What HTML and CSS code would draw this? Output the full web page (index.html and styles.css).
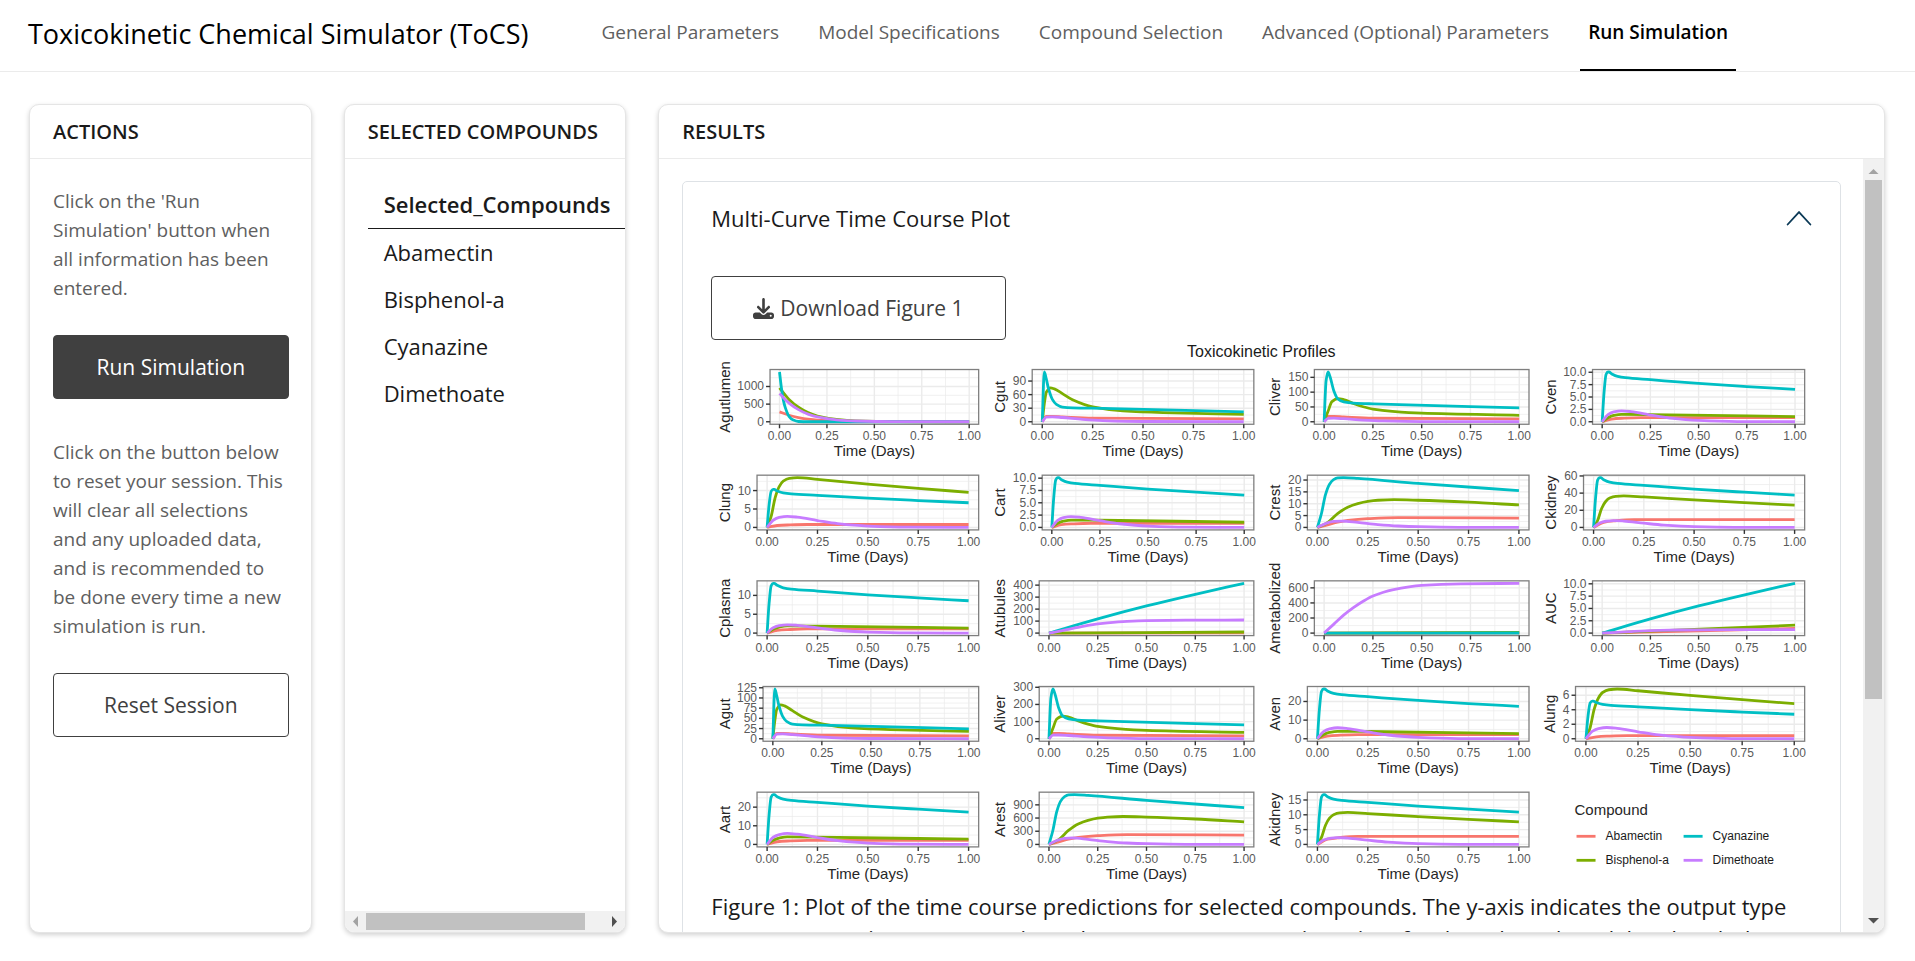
FILE: index.html
```html
<!DOCTYPE html>
<html lang="en">
<head>
<meta charset="utf-8">
<title>Toxicokinetic Chemical Simulator (ToCS)</title>
<link rel="stylesheet" href="styles.css">
</head>
<body>
<header class="navbar">
  <span class="brand">Toxicokinetic Chemical Simulator (ToCS)</span>
  <nav class="tabs">
    <a class="tab" href="#general">General Parameters</a>
    <a class="tab" href="#model">Model Specifications</a>
    <a class="tab" href="#compound">Compound Selection</a>
    <a class="tab" href="#advanced">Advanced (Optional) Parameters</a>
    <a class="tab active" href="#run" aria-current="page">Run Simulation</a>
  </nav>
</header>
<main class="grid">
  <section class="card">
    <h2 class="card-header">ACTIONS</h2>
    <div class="card-body">
      <p class="help">Click on the 'Run Simulation' button when all information has been entered.</p>
      <button class="btn primary" type="button">Run Simulation</button>
      <p class="help">Click on the button below to reset your session. This will clear all selections and any uploaded data, and is recommended to be done every time a new simulation is run.</p>
      <button class="btn" type="button">Reset Session</button>
    </div>
  </section>
  <section class="card">
    <h2 class="card-header">SELECTED COMPOUNDS</h2>
    <div class="table-pane">
      <table class="compounds">
        <thead><tr><th scope="col">Selected_Compounds</th></tr></thead>
        <tbody>
          <tr><td>Abamectin</td></tr>
          <tr><td>Bisphenol-a</td></tr>
          <tr><td>Cyanazine</td></tr>
          <tr><td>Dimethoate</td></tr>
        </tbody>
      </table>
    </div>
    <div class="scroll-x" aria-hidden="true">
      <svg class="arrow" viewBox="0 0 21 21"><path d="M13 5v11l-5-5.5z" fill="#a3a3a3"/></svg>
      <div class="track"><div class="thumb"></div></div>
      <svg class="arrow" viewBox="0 0 21 21"><path d="M8 5v11l5-5.5z" fill="#505050"/></svg>
    </div>
  </section>
  <section class="card wide">
    <h2 class="card-header">RESULTS</h2>
    <div class="results">
      <div class="results-pane">
        <div class="accordion">
          <button class="accordion-toggle" type="button" aria-expanded="true">Multi-Curve Time Course Plot
            <svg class="chevron" viewBox="0 0 24 24"><path d="M1.5 18 12 6.500 22.500 18" fill="none" stroke="#0c3a57" stroke-width="1.700" stroke-linecap="round" stroke-linejoin="round"/></svg>
          </button>
          <div class="accordion-body">
            <button class="btn download" type="button">
              <svg class="icon" viewBox="0 0 512 512" fill="currentColor"><path d="M288 32c0-17.700-14.300-32-32-32s-32 14.300-32 32V274.700l-73.400-73.400c-12.500-12.500-32.800-12.500-45.300 0s-12.500 32.800 0 45.300l128 128c12.500 12.500 32.800 12.500 45.300 0l128-128c12.500-12.500 12.500-32.800 0-45.300s-32.800-12.500-45.300 0L288 274.700V32zM64 352c-35.300 0-64 28.700-64 64v32c0 35.300 28.700 64 64 64H448c35.300 0 64-28.700 64-64V416c0-35.300-28.700-64-64-64H346.500l-45.300 45.300c-25 25-65.500 25-90.500 0L165.500 352H64zm368 56a24 24 0 1 1 0 48 24 24 0 1 1 0-48z"/></svg>
              Download Figure 1
            </button>
            <svg class="figure" id="figure" viewBox="711 340 1100 548" role="img" aria-label="Toxicokinetic Profiles"></svg>
            <p class="caption">Figure 1: Plot of the time course predictions for selected compounds. The y-axis indicates the output type as a concentration or amount in each compartment at a given time for the selected model and each day</p>
          </div>
        </div>
      </div>
      <div class="scroll-y" aria-hidden="true">
        <svg class="arrow" viewBox="0 0 21 21"><path d="M5.500 15h10l-5-5z" fill="#a3a3a3"/></svg>
        <div class="track"><div class="thumb"></div></div>
        <svg class="arrow" viewBox="0 0 21 21"><path d="M5 7h11l-5.500 5.500z" fill="#505050"/></svg>
      </div>
    </div>
  </section>
</main>
<script src="charts.js"></script>
</body>
</html>
```
FILE: styles.css
```css
* { box-sizing: border-box; }
body {
  margin: 0;
  height: 100vh;
  display: flex;
  flex-direction: column;
  overflow: hidden;
  background: #fff;
  color: #1a1a1a;
  font-family: "Open Sans", "Noto Sans", sans-serif;
  font-size: 22px;
  line-height: 33px;
}
button { font: inherit; cursor: pointer; }
.navbar {
  flex: none;
  height: 72px;
  display: flex;
  gap: 65px;
  padding: 0 28px;
  border-bottom: 1px solid #ebebeb;
}
.brand { font-size: 27px; line-height: 67px; color: #000; white-space: nowrap; }
.tabs { display: flex; gap: 23px; }
.tab {
  padding: 0 8px;
  font-size: 19px;
  line-height: 64px;
  color: #5f5f5f;
  text-decoration: none;
  white-space: nowrap;
}
.tab.active { color: #000; font-weight: 600; border-bottom: 2px solid #000; }
.grid {
  flex: 1;
  min-height: 0;
  display: grid;
  grid-template-columns: repeat(12, minmax(0, 1fr));
  gap: 32px;
  padding: 32px 30px 28px 29px;
}
.card {
  grid-column: span 2;
  display: flex;
  flex-direction: column;
  min-height: 0;
  overflow: hidden;
  border: 1px solid #e5e5e5;
  border-radius: 10px;
  box-shadow: 0 2px 5px rgba(0, 0, 0, .18);
  background: #fff;
}
.wide { grid-column: span 8; }
.card-header {
  flex: none;
  margin: 0;
  padding: 1px 23px 0;
  font-size: 20px;
  line-height: 52px;
  font-weight: 600;
  white-space: nowrap;
  border-bottom: 1px solid #ebebeb;
}
.card-body { display: flex; flex-direction: column; padding: 28px 22px 28px 23px; }
.help { margin: 0 0 32px; padding-right: 3px; font-size: 19px; line-height: 29px; color: #5f5f5f; }
.btn {
  height: 64px;
  padding: 0 41px;
  border: 1px solid #404040;
  border-radius: 4px;
  background: #fff;
  color: #404040;
  font-size: 21px;
  white-space: nowrap;
}
.card-body .btn { padding: 0 20px; }
.primary { background: #404040; color: #fff; margin-bottom: 39px; }
.table-pane { flex: 1; overflow: hidden; padding: 22px 0 0 23px; }
.compounds { border-collapse: collapse; min-width: 312px; text-align: left; }
.compounds th { padding: 7px 16px; font-weight: 600; border-bottom: 1px solid #1a1a1a; }
.compounds td { padding: 7px 16px; }
.scroll-x { display: flex; height: 21px; background: #f1f1f1; }
.scroll-x .thumb { width: 92%; height: 17px; margin: 2px 0; }
.arrow { display: block; flex: none; width: 21px; height: 21px; }
.track { flex: 1; }
.thumb { background: #c1c1c1; }
.results { flex: 1; min-height: 0; display: flex; }
.results-pane { flex: 1; min-width: 0; overflow: hidden; padding: 22px 22px 0 23px; }
.accordion { border: 1px solid #dee2e6; border-radius: 5px; padding: 0 28px 28px; }
.accordion-toggle {
  width: 100%;
  height: 72px;
  display: flex;
  align-items: center;
  justify-content: space-between;
  padding: 0;
  border: 0;
  background: none;
  color: #1a1a1a;
}
.chevron { width: 26px; height: 26px; }
.accordion-body { padding-top: 22px; }
.download { display: flex; align-items: center; gap: 6px; }
.icon { width: 21px; height: 21px; }
.figure { display: block; width: 100%; height: auto; font-family: "Liberation Sans", Arial, sans-serif; }
.figure .title { font-size: 16px; fill: #1a1a1a; }
.figure .axis { font-size: 15px; fill: #262626; }
.figure .tick { font-size: 12px; fill: #5a5a5a; }
.figure .key { font-size: 12px; fill: #1a1a1a; }
.caption { margin: 2px 0 0; line-height: 32px; }
.scroll-y { flex: none; width: 21px; display: flex; flex-direction: column; background: #f1f1f1; }
.scroll-y .thumb { width: 17px; height: 71%; margin: 0 2px; }
```
FILE: charts.js
```js
const COLORS = { a: '#F8766D', b: '#7CAE00', c: '#00BFC4', d: '#C77CFF' };

/* Unit-height time courses: [time, value] pairs */
const S = {
  cv: [[0,0],[.01,.6],[.02,.95],[.03,1],[.035,1],[.05,.96],[.08,.91],[.12,.885],[.25,.845],[.5,.77],[.75,.708],[1,.65]],
  bv: [[0,0],[.03,.55],[.06,.85],[.1,1],[.25,.97],[1,.7]],
  av: [[0,0],[.05,.65],[.1,.83],[.2,1],[1,1]],
  dv: [[0,0],[.03,.65],[.06,.9],[.1,1],[.15,.93],[.25,.62],[.35,.34],[.5,.12],[.7,.02],[1,0]],
  cg: [[0,0],[.01,1],[.02,.86],[.03,.68],[.05,.45],[.07,.35],[.1,.295],[.15,.28],[.3,.268],[1,.2]],
  bg: [[0,0],[.01,.53],[.02,.87],[.04,1],[.06,.97],[.1,.83],[.15,.65],[.25,.44],[.4,.32],[.6,.27],[1,.22]],
  ag: [[0,0],[.02,1],[.05,1],[.1,.9],[.25,.66],[1,.55]],
  dg: [[0,0],[.02,.95],[.05,1],[.1,.86],[.2,.48],[.3,.24],[.5,.05],[1,0]],
  cl: [[0,0],[.01,.82],[.02,1],[.03,.91],[.05,.62],[.07,.46],[.1,.4],[.15,.375],[.25,.36],[1,.28]],
  bl: [[0,0],[.02,.45],[.04,.87],[.07,1],[.1,.96],[.15,.79],[.2,.65],[.25,.55],[.35,.45],[.5,.37],[1,.28]],
  bu: [[0,0],[.02,.22],[.04,.6],[.06,.82],[.08,.93],[.11,.985],[.15,1],[.25,.965],[.5,.87],[.75,.785],[1,.705]],
  cr: [[0,0],[.02,.28],[.04,.66],[.06,.87],[.08,.96],[.1,.995],[.13,1],[.2,.985],[.5,.885],[1,.74]],
  br: [[0,0],[.05,.17],[.1,.5],[.15,.73],[.2,.86],[.25,.94],[.3,.98],[.38,1],[.5,.98],[.75,.91],[1,.81]],
  ar: [[0,0],[.05,.25],[.1,.54],[.15,.73],[.25,.9],[.4,1],[1,.96]],
  dr: [[0,0],[.04,.6],[.08,.93],[.12,1],[.2,.78],[.3,.44],[.4,.22],[.5,.11],[.7,.02],[1,0]],
  line: [[0,0],[1,1]],
  bend: [[0,0],[.25,.285],[.5,.545],[.75,.78],[1,1]],
  sat: [[0,0],[.05,.13],[.1,.29],[.15,.44],[.2,.59],[.25,.7],[.3,.78],[.4,.89],[.5,.95],[.7,.99],[1,1]],
  met: [[0,0],[.05,.18],[.1,.36],[.15,.51],[.2,.64],[.25,.745],[.35,.87],[.5,.96],[.7,.99],[1,1]],
  gc: [[0,1],[.01,.68],[.02,.44],[.03,.29],[.05,.11],[.07,.04],[.1,.005],[.15,0],[1,0]],
  gb: [[0,1],[.05,.66],[.1,.43],[.15,.27],[.2,.17],[.3,.07],[.4,.027],[.6,.005],[1,0]]
};

/* row, column, name, panel left, top value, tick step, tick count, decimals, curves */
const PANELS = [
  [0,0,'Agutlumen',770,1411,500,3,0,{a:['gb',280],b:['gb',960],c:['gc',1411],d:['gb',800]}],
  [0,1,'Cgut',1032,110,30,4,0,{a:['ag',12],b:['bg',75],c:['cg',110],d:['dg',11]}],
  [0,2,'Cliver',1314,168,50,4,0,{a:['ag',18],b:['bl',78],c:['cl',168],d:['dg',12]}],
  [0,3,'Cven',1592,10.05,2.5,5,1,{a:['av',.85],b:['bv',1.5],c:['cv',10.05],d:['dv',2.2]}],
  [1,0,'Clung',757,13.5,5,3,0,{a:['av',.8],b:['bu',13.5],c:['cv',10.3],d:['dv',3]}],
  [1,1,'Cart',1042,10.1,2.5,5,1,{a:['av',.85],b:['bv',1.5],c:['cv',10.1],d:['dv',2.2]}],
  [1,2,'Crest',1307,21,5,5,0,{a:['ar',4.1],b:['br',11.7],c:['cr',21],d:['dr',2.7]}],
  [1,3,'Ckidney',1583,58,20,4,0,{a:['av',9.2],b:['bu',36.8],c:['cv',58],d:['dv',8]}],
  [2,0,'Cplasma',757,13.2,5,3,0,{a:['av',1.1],b:['bv',1.9],c:['cv',13.2],d:['dv',2.2]}],
  [2,1,'Atubules',1039,415,100,5,0,{a:['line',2],b:['line',9],c:['bend',415],d:['sat',109]}],
  [2,2,'Ametabolized',1314,660,200,4,0,{a:['line',3],b:['line',10],c:['line',1],d:['met',660]}],
  [2,3,'AUC',1592,10.1,2.5,5,1,{a:['line',.95],b:['line',1.6],c:['bend',10.1],d:['sat',.7]}],
  [3,0,'Agut',763,122,25,6,0,{a:['ag',13],b:['bg',83],c:['cg',122],d:['dg',12]}],
  [3,1,'Aliver',1039,290,100,4,0,{a:['ag',31],b:['bl',132],c:['cl',290],d:['dg',22]}],
  [3,2,'Aven',1307,26.7,10,3,0,{a:['av',2.2],b:['bv',4],c:['cv',26.7],d:['dv',5.9]}],
  [3,3,'Alung',1575,6.86,2,4,0,{a:['av',.42],b:['bu',6.86],c:['cv',5.2],d:['dv',1.55]}],
  [4,0,'Aart',757,26.7,10,3,0,{a:['av',2.2],b:['bv',4],c:['cv',26.7],d:['dv',5.9]}],
  [4,1,'Arest',1039,1132,300,4,0,{a:['ar',222],b:['br',635],c:['cr',1132],d:['dr',148]}],
  [4,2,'Akidney',1307,16.8,5,4,0,{a:['av',2.7],b:['bu',10.8],c:['cv',16.8],d:['dv',2.3]}]
];
const RIGHT = [978.5, 1253.5, 1528.5, 1804];
const NAME_X = [730, 1005, 1280, 1555];
const TOP = 369.5, PITCH = 105.6, HEIGHT = 54.7;

const figure = document.getElementById('figure');
function add(tag, attrs, text) {
  const el = document.createElementNS('http://www.w3.org/2000/svg', tag);
  for (const k in attrs) el.setAttribute(k, attrs[k]);
  if (text !== undefined) el.textContent = text;
  figure.appendChild(el);
}
function line(x1, y1, x2, y2, stroke, width) {
  add('line', { x1, y1, x2, y2, stroke, 'stroke-width': width });
}

/* Monotone cubic path through points */
function curve(p) {
  const n = p.length, s = [], m = [];
  for (let i = 0; i < n - 1; i++) s.push((p[i + 1][1] - p[i][1]) / (p[i + 1][0] - p[i][0]));
  for (let i = 0; i < n; i++) {
    if (i === 0) m.push(s[0]);
    else if (i === n - 1) m.push(s[n - 2]);
    else m.push(s[i - 1] * s[i] <= 0 ? 0 : 2 * s[i - 1] * s[i] / (s[i - 1] + s[i]));
  }
  let d = `M${p[0][0]} ${p[0][1]}`;
  for (let i = 0; i < n - 1; i++) {
    const h = (p[i + 1][0] - p[i][0]) / 3;
    d += `C${p[i][0] + h} ${p[i][1] + m[i] * h} ${p[i + 1][0] - h} ${p[i + 1][1] - m[i + 1] * h} ${p[i + 1][0]} ${p[i + 1][1]}`;
  }
  return d;
}

add('text', { x: 1261, y: 357, class: 'title', 'text-anchor': 'middle' }, 'Toxicokinetic Profiles');

for (const [row, col, name, left, max, step, count, decimals, curves] of PANELS) {
  const top = TOP + row * PITCH, bottom = top + HEIGHT, right = RIGHT[col], width = right - left;
  const X = t => left + width * (1 + 20 * t) / 22;
  const Y = v => bottom - HEIGHT * (1 + 20 * v / max) / 22;
  for (let i = 0; i < 4; i++) line(X(i / 4 + .125), top, X(i / 4 + .125), bottom, '#ebebeb', .7);
  for (let i = 0; i <= count; i++) {
    const y = Y((i + .5) * step);
    if (y > top) line(left, y, right, y, '#ebebeb', .7);
  }
  for (let i = 0; i < 5; i++) line(X(i / 4), top, X(i / 4), bottom, '#ebebeb', 1.4);
  for (let i = 0; i < count; i++) line(left, Y(i * step), right, Y(i * step), '#ebebeb', 1.4);
  for (const k of ['a', 'b', 'c', 'd']) {
    const [shape, scale] = curves[k];
    add('path', { d: curve(S[shape].map(([t, v]) => [X(t), Y(v * scale)])), fill: 'none', stroke: COLORS[k], 'stroke-width': 2.8, 'stroke-linejoin': 'round' });
  }
  add('rect', { x: left, y: top, width, height: HEIGHT, fill: 'none', stroke: '#7f7f7f', 'stroke-width': 1.3 });
  for (let i = 0; i < 5; i++) {
    line(X(i / 4), bottom, X(i / 4), bottom + 4, '#333', 1.4);
    add('text', { x: X(i / 4), y: bottom + 16, class: 'tick', 'text-anchor': 'middle' }, (i / 4).toFixed(2));
  }
  for (let i = 0; i < count; i++) {
    const y = Y(i * step);
    line(left - 4, y, left, y, '#333', 1.4);
    add('text', { x: left - 6, y: y + 4, class: 'tick', 'text-anchor': 'end' }, (i * step).toFixed(decimals));
  }
  add('text', { x: (left + right) / 2, y: bottom + 32, class: 'axis', 'text-anchor': 'middle' }, 'Time (Days)');
  const cy = (top + bottom) / 2;
  add('text', { x: NAME_X[col], y: cy, class: 'axis', 'text-anchor': 'middle', transform: `rotate(-90 ${NAME_X[col]} ${cy})` }, name);
}

add('text', { x: 1574, y: 815, class: 'axis' }, 'Compound');
[['a', 'Abamectin', 0, 0], ['b', 'Bisphenol-a', 0, 1], ['c', 'Cyanazine', 1, 0], ['d', 'Dimethoate', 1, 1]].forEach(([k, label, c, r]) => {
  const x = 1576 + c * 107, y = 836 + r * 24;
  line(x, y, x + 19, y, COLORS[k], 2.8);
  add('text', { x: x + 29, y: y + 4, class: 'key' }, label);
});
```
